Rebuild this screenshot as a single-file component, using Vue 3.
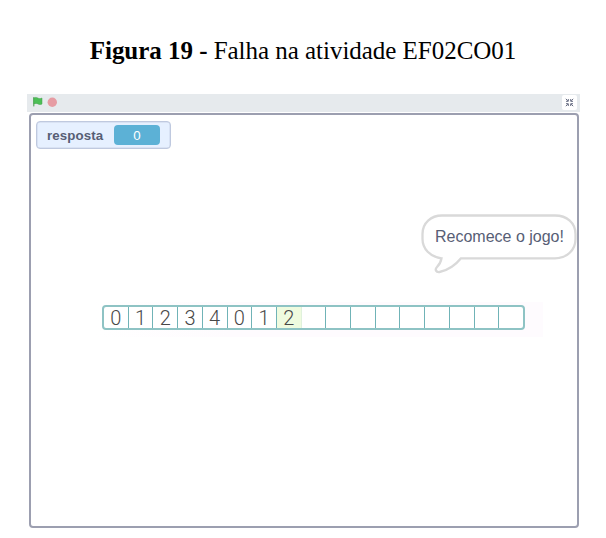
<script setup>
const cells = ['0', '1', '2', '3', '4', '0', '1', '2', '', '', '', '', '', '', '', '', '']
const activeIndex = 7
</script>

<template>
  <main class="page">
    <h1 class="caption"><b>Figura 19 - </b>Falha na atividade EF02CO01</h1>
    <section class="player">
      <header class="toolbar">
        <svg class="controls" width="28" height="12" viewBox="0 0 28 12">
          <path d="M1.800 1.500v8.500" stroke="#459b49" stroke-width="1" stroke-linecap="round" />
          <path d="M1.800 2C3.500 1 4.800 1.400 6 2.100S8.400 2.800 10 2v6C8.400 8.900 7.100 8.500 6 7.900S3.400 7.100 1.800 8z" fill="#4cbf56" stroke="#45a34c" stroke-width=".5" />
          <circle cx="20.300" cy="6.300" r="4.700" fill="#e69ca3" />
        </svg>
        <button class="shrink" aria-label="Reduzir">
          <svg width="9" height="9" viewBox="0 0 9 9" fill="none" stroke="#656b80" stroke-width="1">
            <path d="M.8.8 2.800 2.800M8.200.8l-2 2M.8 8.200l2-2M8.200 8.200l-2-2M1 3.300h2.300V1M8 3.300H5.700V1M1 5.700h2.300V8M8 5.700H5.700V8" />
          </svg>
        </button>
      </header>
      <div class="stage">
        <div class="monitor">
          <span class="label">resposta</span>
          <span class="value">0</span>
        </div>
        <div class="bubble">
          <svg width="156" height="60" viewBox="0 0 156 60" fill="#fff" stroke="#d9d9d9" stroke-width="2.300">
            <path d="M20.500 44.300C9 42.500 1.500 35 1.500 25V20C1.500 9 10 1.500 21 1.500H134C146 1.500 154.500 9 154.500 20V25C154.500 36 146 44.300 134 44.300H40C35.500 50 27 56.500 18.500 58C15 58.500 13.500 55.500 16 53C18.500 50.500 20 47.500 20.500 44.300Z" />
          </svg>
          <span class="speech">Recomece o jogo!</span>
        </div>
        <div class="strip">
          <div class="track">
            <span v-for="(cell, i) in cells" :key="i" class="cell" :class="{ active: i === activeIndex }">{{ cell }}</span>
          </div>
        </div>
      </div>
    </section>
  </main>
</template>

<style>
body { margin: 0; background: #fff; }
</style>

<style scoped>
* { box-sizing: border-box; }
.page { width: 606px; height: 538px; overflow: hidden; }
.caption {
  margin: 0;
  padding: 36px 0 0;
  height: 94px;
  font: 400 25px/30px "Liberation Serif", serif;
  letter-spacing: -0.030px;
  text-align: center;
  white-space: nowrap;
  color: #000;
}
.player { width: 553px; margin-left: 27px; }
.toolbar {
  display: flex;
  align-items: center;
  justify-content: space-between;
  height: 18px;
  padding: 0 3px 0 5px;
  background: #e6eaed;
}
.controls { display: block; margin-bottom: 2px; }
.shrink {
  display: flex;
  align-items: center;
  justify-content: center;
  width: 15px;
  height: 15px;
  margin-bottom: 1px;
  padding: 0;
  border: 0;
  border-radius: 2px;
  background: #fff;
}
.stage {
  position: relative;
  width: 550px;
  height: 415px;
  margin: 1px 0 0 2px;
  padding: 6px 0 0 5px;
  border: 2px solid #9c9fb0;
  border-radius: 4px;
  background: #fff;
}
.monitor {
  display: flex;
  align-items: center;
  justify-content: space-between;
  width: 135px;
  height: 28px;
  padding: 0 10px;
  border: 1px solid #bfc9df;
  box-shadow: inset 0 0 0 .5px #cbd4e8;
  border-radius: 4px;
  background: #e6f0ff;
  font: 13.300px/18px "Liberation Sans", sans-serif;
}
.label { padding-top: 2px; font-weight: 700; letter-spacing: .1px; color: #575e75; }
.value {
  width: 46px;
  height: 20px;
  line-height: 21px;
  border-radius: 4px;
  background: #5cb1d6;
  color: #fff;
  text-align: center;
}
.bubble {
  position: absolute;
  left: 390px;
  top: 99px;
  width: 156px;
  height: 60px;
}
.bubble svg { display: block; }
.speech {
  position: absolute;
  left: 14px;
  top: 13px;
  font: 16px/20px "Liberation Sans", sans-serif;
  white-space: nowrap;
  color: #575e75;
}
.strip {
  width: 447px;
  margin: 153px 0 0 60px;
  padding: 3px 0 7px 6px;
  background: linear-gradient(90deg, #fff, #fefbfe 30%, #fefbfe);
}
.track {
  display: flex;
  width: 423px;
  height: 25px;
  border: 2px solid #8ec3c4;
  border-radius: 4px;
  background: #fff;
  overflow: hidden;
}
.cell {
  flex: 1 1 0;
  border-right: 1px solid #70b3b7;
  font: 300 20px/23px Roboto, sans-serif;
  text-align: center;
  color: #484848;
}
.cell:last-child { border-right: 0; }
.active { background: #effbdf; border-right-color: #e0f1dc; }
</style>
